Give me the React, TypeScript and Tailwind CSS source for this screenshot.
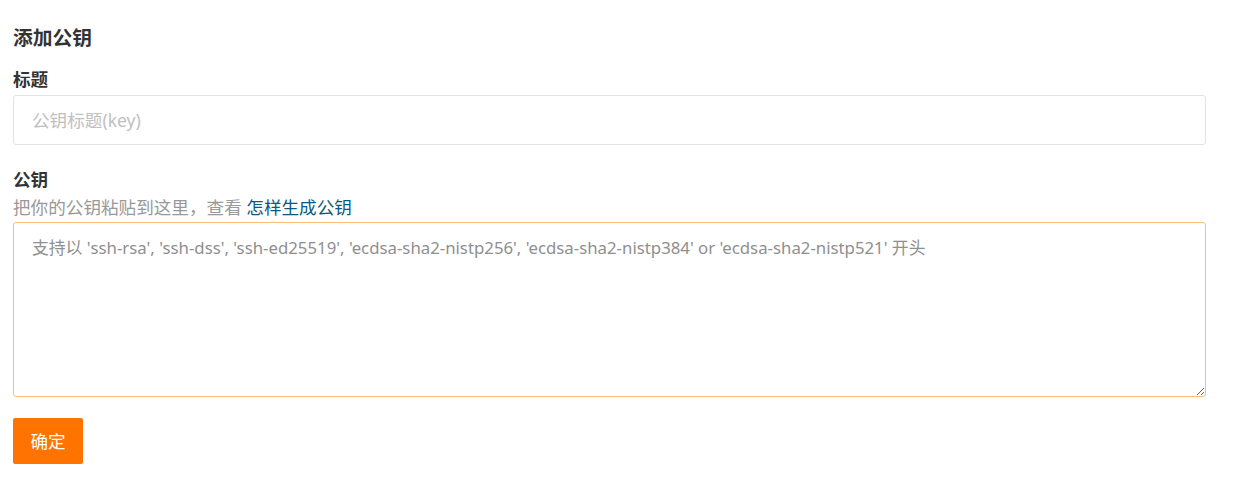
import { useState } from 'react'

const FONT = "font-['Segoe_UI','Noto_Sans','Noto_Sans_CJK_SC',sans-serif]"

export default function App() {
  const [title, setTitle] = useState('')
  const [key, setKey] = useState('')

  return (
    <div className={`min-h-[501px] bg-white px-[13px] pt-[26px] text-[#333] ${FONT}`}>
      <div className="w-[1193px]">
        <h3 className="text-[19.8px] font-bold leading-6 text-[#333]">添加公钥</h3>

        <label className="mt-[18px] block text-[17.6px] font-bold leading-[22px] text-[#333]">标题</label>
        <input
          value={title}
          onChange={(e) => setTitle(e.target.value)}
          placeholder="公钥标题(key)"
          className="mt-[5px] block h-[50px] w-full rounded-[3px] border border-[#e3e3e3] px-[18px] text-[17.6px] text-[#333] outline-none placeholder:text-[#c0c0c0]"
        />

        <label className="mt-[23px] block text-[17.6px] font-bold leading-[22px] text-[#333]">公钥</label>
        <p className="mt-[6px] text-[17.6px] leading-[22px] text-[#999]">
          把你的公钥粘贴到这里，查看 <a href="#" className="text-[#0b5a7d]">怎样生成公钥</a>
        </p>
        <textarea
          value={key}
          onChange={(e) => setKey(e.target.value)}
          placeholder="支持以 'ssh-rsa', 'ssh-dss', 'ssh-ed25519', 'ecdsa-sha2-nistp256', 'ecdsa-sha2-nistp384' or 'ecdsa-sha2-nistp521' 开头"
          className="mt-[4px] block h-[175px] w-full rounded-[3px] border border-[#fdbd7f] px-[18px] pt-[13px] text-[16.8px] leading-6 text-[#333] outline-none placeholder:text-[#8f8f8f]"
        />

        <button className="mt-[21px] h-[46px] w-[70px] rounded-[2px] bg-[#ff7300] text-[17.6px] text-white">确定</button>
      </div>
    </div>
  )
}
